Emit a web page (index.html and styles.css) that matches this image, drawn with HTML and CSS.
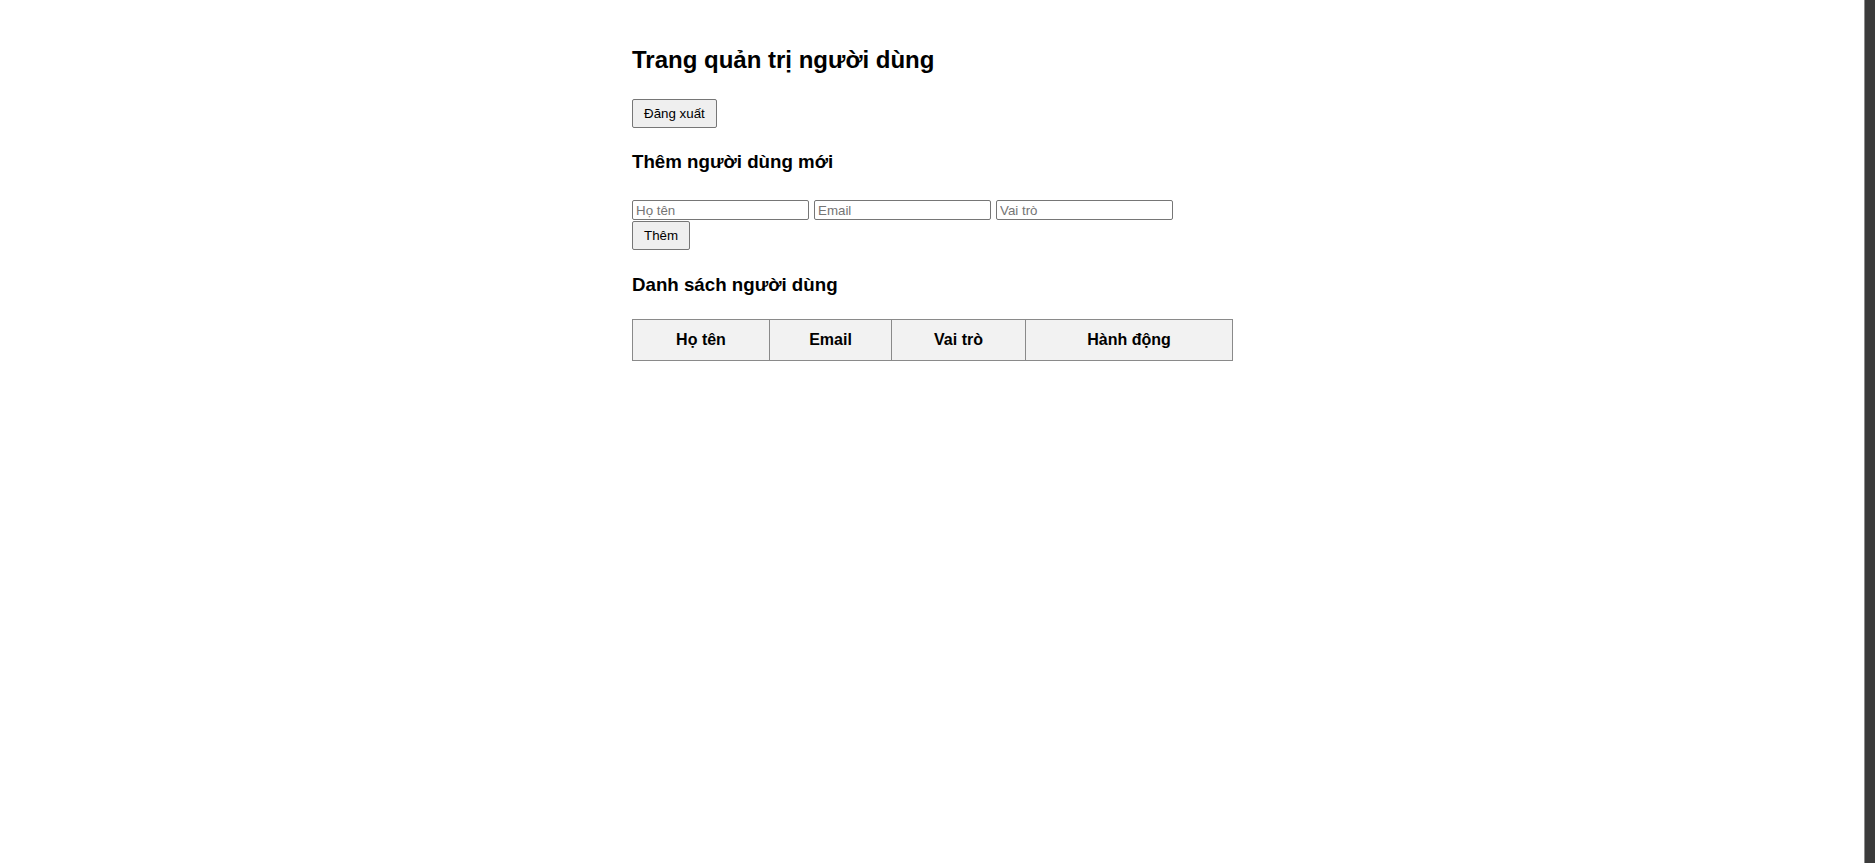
FILE: index.html
```html
<!DOCTYPE html>
<html lang="vi">
<head>
<meta charset="utf-8">
<title>Trang quản trị người dùng</title>
<link rel="stylesheet" href="styles.css">
</head>
<body>
<div class="page">
  <main class="container">
    <h2 class="title">Trang quản trị người dùng</h2>
    <div class="logout-row">
      <button class="btn" type="button">Đăng xuất</button>
    </div>
    <h3 class="section-title section-add">Thêm người dùng mới</h3>
    <form class="add-form">
      <div class="input-row">
        <input class="field" type="text" placeholder="Họ tên">
        <input class="field" type="text" placeholder="Email">
        <input class="field" type="text" placeholder="Vai trò">
      </div>
      <div class="submit-row">
        <button class="btn" type="button">Thêm</button>
      </div>
    </form>
    <h3 class="section-title section-list">Danh sách người dùng</h3>
    <table class="users">
      <colgroup>
        <col class="c-name">
        <col class="c-email">
        <col class="c-role">
        <col class="c-action">
      </colgroup>
      <thead>
        <tr>
          <th>Họ tên</th>
          <th>Email</th>
          <th>Vai trò</th>
          <th>Hành động</th>
        </tr>
      </thead>
      <tbody></tbody>
    </table>
  </main>
  <aside class="scroll-strip"></aside>
</div>
</body>
</html>
```

FILE: styles.css
```css
html, body {
  margin: 0;
  padding: 0;
  background: #ffffff;
}

body {
  font-family: "Liberation Sans", Arial, sans-serif;
  color: #000000;
}

.page {
  display: flex;
  min-height: 100vh;
}

.container {
  flex: 1;
  display: flex;
  flex-direction: column;
  align-items: flex-start;
  width: 600px;
  max-width: 600px;
  margin: 0 auto;
  padding-top: 46px;
}

.title {
  margin: 0;
  font-size: 24px;
  line-height: 28px;
  font-weight: bold;
}

.logout-row {
  margin-top: 25px;
}

.btn {
  font-family: "Liberation Sans", Arial, sans-serif;
  font-size: 13.333px;
  line-height: 17px;
  height: 29px;
  padding: 5px 11px;
  color: #000000;
  background: #efefef;
  border: 1px solid #767676;
  border-radius: 2px;
  box-sizing: border-box;
}

.section-title {
  margin: 0;
  font-size: 18.72px;
  line-height: 22px;
  font-weight: bold;
}

.section-add {
  margin-top: 23px;
}

.add-form {
  margin: 27px 0 0 0;
}

.input-row {
  display: flex;
  gap: 5px;
}

.field {
  width: 177px;
  height: 20px;
  box-sizing: border-box;
  padding: 1px 3px;
  font-family: "Liberation Sans", Arial, sans-serif;
  font-size: 13.333px;
  border: 1px solid #767676;
  border-radius: 2px;
  background: #ffffff;
}

.field::placeholder {
  color: #757575;
}

.submit-row {
  margin-top: 1px;
}

.section-list {
  margin-top: 24px;
}

.users {
  margin-top: 23px;
  width: 600px;
  border-collapse: collapse;
  table-layout: fixed;
}

.c-name { width: 137px; }
.c-email { width: 122px; }
.c-role { width: 134px; }
.c-action { width: 207px; }

.users th {
  background: #f2f2f2;
  border: 1px solid #8a8a8a;
  font-size: 16px;
  line-height: 18px;
  font-weight: bold;
  padding: 11px 8px;
  text-align: center;
}

.scroll-strip {
  width: 10px;
  flex: 0 0 10px;
  background: #3b3b3b;
  border-left: 1px solid #8c8c8c;
}
```
